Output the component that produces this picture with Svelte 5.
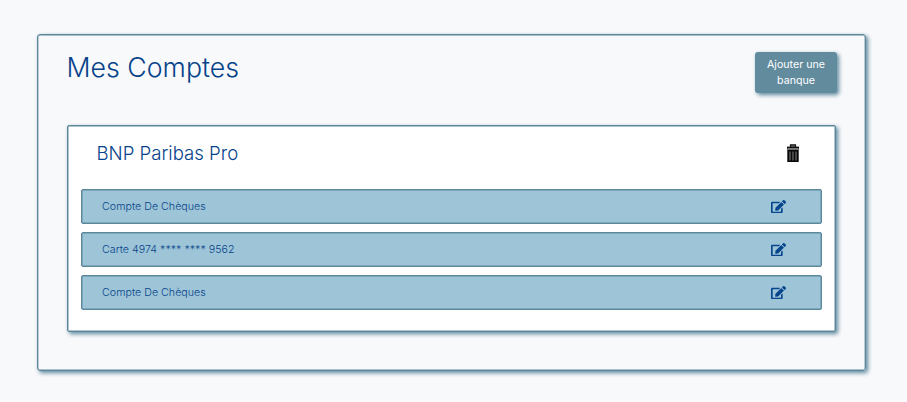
<script>
  const accounts = ['Compte De Chèques', 'Carte 4974 **** **** 9562', 'Compte De Chèques'];
</script>

<main>
  <section class="panel">
    <header class="top">
      <h1>Mes Comptes</h1>
      <button class="add">Ajouter une banque</button>
    </header>
    <article class="bank">
      <div class="bank-head">
        <h2>BNP Paribas Pro</h2>
        <svg class="trash" viewBox="0 0 12 18" width="12" height="18" aria-hidden="true">
          <path d="M3.500 3V.9h5V3" fill="#777" stroke="#111" stroke-width="1.2" />
          <path d="M0 2.600h12v3H0z" fill="#111" />
          <path d="M.5 4.500h11" stroke="#777" stroke-width="1" />
          <path d="M.3 6h11.400v12H.3z" fill="#080808" />
          <path d="M3 7.500v9M6 7.500v9M9 7.500v9" stroke="#858585" stroke-width="1" />
        </svg>
      </div>
      <ul>
        {#each accounts as account}
          <li>
            <span>{account}</span>
            <svg class="edit" viewBox="0 0 576 512" width="15" height="13.33" aria-hidden="true">
              <path fill="#07468c" d="M402.600 83.200l90.200 90.200c3.800 3.800 3.800 10 0 13.800L274.400 405.600l-92.800 10.300c-12.400 1.400-22.900-9.100-21.500-21.500l10.300-92.800L388.800 83.200c3.800-3.800 10-3.800 13.800 0zm162-22.900l-48.800-48.800c-15.200-15.200-39.900-15.200-55.200 0l-35.400 35.400c-3.800 3.800-3.800 10 0 13.800l90.200 90.200c3.800 3.800 10 3.800 13.800 0l35.400-35.400c15.200-15.300 15.200-40 0-55.200zM384 346.200V448H64V128h229.800c3.200 0 6.200-1.300 8.500-3.500l40-40c7.600-7.600 2.200-20.500-8.500-20.500H48C21.500 64 0 85.500 0 112v352c0 26.500 21.500 48 48 48h352c26.500 0 48-21.500 48-48V306.200c0-10.700-12.900-16-20.500-8.500l-40 40c-2.200 2.300-3.500 5.300-3.500 8.500z" />
            </svg>
          </li>
        {/each}
      </ul>
    </article>
  </section>
</main>

<style>
  :global(body) { background: #f8f9fb; }
  main {
    box-sizing: border-box;
    height: 402px;
    padding: 34.400px 41px 31px 36.600px;
    font-family: Inter, "Liberation Sans", sans-serif;
    font-weight: 350;
    color: #07438a;
  }
  .panel {
    box-sizing: border-box;
    height: 336.600px;
    padding: 16.500px 29px 0 29px;
    border: 1.500px solid #5d889c;
    border-radius: 3px;
    box-shadow: 2px 2px 4px #5d889c, inset 0 0 0 .4px #5d889c;
  }
  .top { display: flex; justify-content: space-between; height: 73px; }
  h1, h2 { margin: 0; font-weight: 350; white-space: nowrap; }
  h1 { margin-top: -1.500px; font-size: 26.700px; line-height: 34px; }
  h2 { font-size: 18.600px; line-height: 24px; }
  .add {
    width: 82px;
    height: 41px;
    margin-right: -1px;
    padding: 1px 8px 0;
    border: 0;
    border-radius: 3px;
    background: #628b9e;
    color: #fff;
    font: 400 10.650px/16px Inter, "Liberation Sans", sans-serif;
    box-shadow: 2px 2px 4px #5d889c;
  }
  .bank {
    box-sizing: border-box;
    height: 207px;
    padding: 15.500px 13px 0 12.900px;
    border: 1px solid #5d889c;
    border-radius: 2px;
    background: #fff;
    box-shadow: 2px 2px 4px #5d889c, inset 0 0 0 .5px #5d889c;
  }
  .bank-head { display: flex; justify-content: space-between; height: 47.300px; padding: 0 23.500px 0 16px; }
  .trash { margin-top: 2.500px; }
  ul { margin: 0 0 0 .5px; padding: 0; list-style: none; display: grid; gap: 8px; }
  li {
    box-sizing: border-box;
    height: 35.200px;
    display: flex;
    align-items: center;
    justify-content: space-between;
    padding: 0 35px 0 20.100px;
    border: 1px solid #5d889c;
    border-radius: 2px;
    background: #9dc5d7;
    box-shadow: inset 0 0 0 .5px #5d889c;
    font-size: 10.650px;
    letter-spacing: .02px;
  }
</style>
